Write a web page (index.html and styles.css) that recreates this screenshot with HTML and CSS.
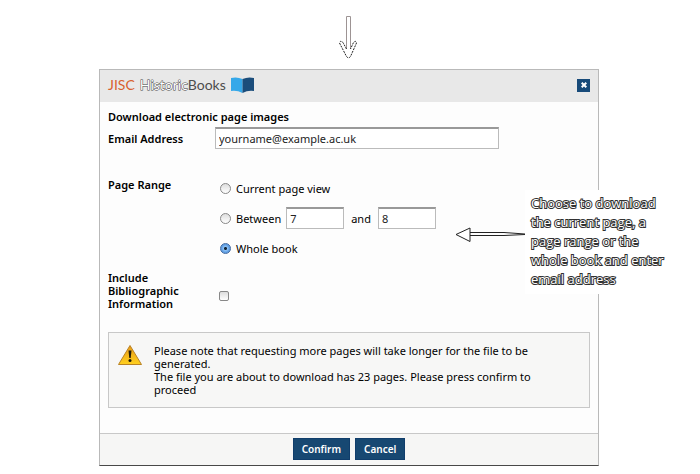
FILE: index.html
```
<!DOCTYPE html>
<html lang="en">
<head>
<meta charset="utf-8">
<title>Download electronic page images</title>
<link rel="stylesheet" href="styles.css">
</head>
<body>
<svg class="arrow-down" viewBox="0 0 20 44" width="20" height="44" aria-hidden="true">
  <path d="M8.500 34V.5h4V34" fill="#fff" stroke="#9d9494"/>
  <path d="M8.500 33 5 26.500Q2 24 1.500 27L8.500 40.500Q10.500 43 12.500 40.500L18.500 27Q18 24 15.500 26.500L12.500 33" fill="#fff" stroke="#222" stroke-dasharray="2 1"/>
</svg>
<form class="dialog">
  <header class="header">
    <div class="logo"><span class="jisc">JISC</span><span><span class="historic">Historic</span><span class="books">Books</span></span>
      <svg viewBox="0 0 23 16" width="23" height="16" aria-hidden="true">
        <path d="M0 1Q6-.5 11.500 2V16Q6 13 0 14Z" fill="#35a8e9"/>
        <path d="M11.500 2Q17-.5 23 1V14Q17 13 11.500 16Z" fill="#1b4d7b"/>
      </svg>
    </div>
    <button class="close" type="button" aria-label="Close"><svg viewBox="0 0 6 6" width="6" height="6"><path d="M.7.7 5.300 5.300M5.300.7.7 5.300" stroke="#fff" stroke-width="2"/></svg></button>
  </header>
  <main class="content">
    <h1 class="title">Download electronic page images</h1>
    <div class="row email-row">
      <label class="name" for="email">Email Address</label>
      <input class="field" id="email" type="text" value="yourname@example.ac.uk">
    </div>
    <div class="row range-row" role="radiogroup" aria-labelledby="range">
      <span class="name" id="range">Page Range</span>
      <div class="options">
        <div class="option"><input id="current" class="radio" type="radio" name="range"><label for="current">Current page view</label></div>
        <div class="option"><input id="between" class="radio" type="radio" name="range"><label for="between">Between</label>
          <input class="field page" type="text" value="7" aria-label="First page"><label class="and" for="last">and</label><input class="field page" id="last" type="text" value="8"></div>
        <div class="option"><input id="whole" class="radio" type="radio" name="range" checked><label for="whole">Whole book</label></div>
      </div>
    </div>
    <div class="row include-row">
      <label class="name" for="include">Include Bibliographic Information</label>
      <input class="check" id="include" type="checkbox">
    </div>
    <div class="notice">
      <svg viewBox="0 0 26 22" width="26" height="22" aria-hidden="true">
        <defs><linearGradient id="amber" x2="0" y2="1"><stop stop-color="#e89b16"/><stop offset="1" stop-color="#ffd01f"/></linearGradient></defs>
        <path d="M13 1.500 24.500 20.500H1.500Z" fill="url(#amber)" stroke="#b98225" stroke-linejoin="round"/>
        <path d="M11.500 6.500h3l-.8 7.500h-1.400Z" fill="#221a08"/><circle cx="13" cy="16.500" r="1.500" fill="#221a08"/>
      </svg>
      <p>Please note that requesting more pages will take longer for the file to be generated.<br>The file you are about to download has 23 pages. Please press confirm to proceed</p>
    </div>
  </main>
  <footer class="footer">
    <button class="button" type="submit">Confirm</button>
    <button class="button" type="button">Cancel</button>
  </footer>
  <aside class="callout">
    <svg viewBox="0 0 70 18" width="70" height="18" aria-hidden="true">
      <path d="M15 6.500H49L70 8M15 9.500H49L70 8.500" fill="#fff" stroke="#222"/>
      <path d="M1 8.500 15 2V15.500Z" fill="#fff" stroke="#222"/>
    </svg>
    <p>Choose to download the current page, a page range or the whole book and enter email address</p>
  </aside>
</form>
</body>
</html>
```
FILE: styles.css
```
* { box-sizing: border-box; }
body { margin: 0; background: #fff; color: #000; font: 11px/13px "Noto Sans", "Open Sans", sans-serif; }
p, h1 { margin: 0; }
input, button { font: inherit; margin: 0; }
svg { display: block; flex: none; }

.arrow-down { margin: 16px 0 9px 48.3%; }
.dialog {
  position: relative;
  margin: 0 101px 0 99px;
  border: 1px solid #b9b9b9;
  border-bottom-color: #484848;
  background: #fdfdfd;
}
.header {
  display: flex; align-items: center; justify-content: space-between;
  height: 32px; padding: 0 8px 2px; background: #e8e8e8;
}
.logo { display: flex; align-items: center; gap: 5px; font: 14px/18px Lato, "Open Sans", sans-serif; color: #4d4d4d; }
.jisc { color: #d8602e; }
.historic { color: #fff; -webkit-text-stroke: 1px #444; paint-order: stroke fill; }
.close {
  display: grid; place-items: center;
  width: 13px; height: 13px; padding: 0; border: 0; background: #174a79;
}

.content { padding: 8px 8px 25px; }
.title { font-size: 11px; line-height: 13px; font-weight: 600; }
.row { display: grid; grid-template-columns: 107px 1fr; }
.name { font-weight: 600; }
.email-row { align-items: center; margin-top: 4px; padding-right: 91px; }
.field {
  width: 100%; height: 22px; padding: 0 3px 1px;
  border: 1px solid #bbb; border-top: 2px solid #999; border-radius: 0;
  background: #fff; color: #222; outline: 0;
}
.range-row { margin-top: 24px; }
.range-row .name { padding-top: 5px; }
.option { display: flex; align-items: center; height: 30px; }
.page { width: 58px; }
.option label + .page { margin-left: 5px; }
.option .and { margin: 0 7px; }
.option .and + .page { margin-left: 0; }
.radio, .check { appearance: none; flex: none; border: 1px solid #888; background: linear-gradient(#ddd, #fff); }
.radio { width: 11px; height: 11px; margin: 0 5px 0 5px; border-radius: 50%; }
.radio:checked { border-color: #3f679f; background: radial-gradient(circle, #123 0 1px, #8cc0f4 2px, #5a9be2 4px, #b8e0ff); }
.include-row { align-items: center; margin-top: 8px; }
.include-row .name { width: 86px; }
.check { width: 10px; height: 10px; margin: 10px 0 0 4px; border-radius: 2px; }
.notice {
  display: flex; gap: 11px; margin-top: 22px; padding: 11px 32px 11px 8px;
  border: 1px solid #c8c8c8; background: #f7f7f6;
}
.footer {
  display: flex; justify-content: center; gap: 5px; padding: 4px 8px 5px;
  border-top: 1px solid #c8c8c8; background: #f6f6f5;
}
.button { height: 22px; padding: 0 8px; border: 1px solid #103d6b; background: #174872; color: #fff; font-size: 10px; font-weight: 600; }
.callout { position: absolute; top: 120px; left: 355px; display: flex; align-items: center; }
.callout p {
  width: 152px; padding: 4px 6px 5px; background: #fff; color: #fff;
  font-family: "Open Sans", sans-serif; font-size: 13px; line-height: 19px; -webkit-text-stroke: 2px #303030; paint-order: stroke fill;
}
.callout svg { margin-top: -14px; }
```
